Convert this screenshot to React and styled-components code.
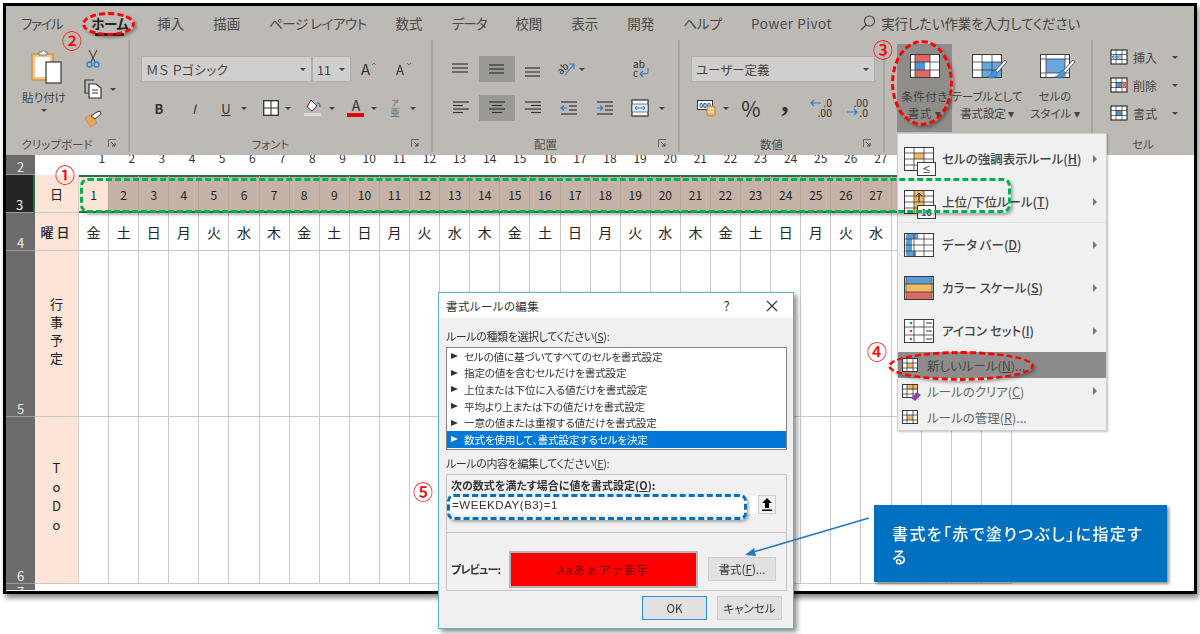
import React from "react";
import styled, { createGlobalStyle } from "styled-components";

const GlobalStyle = createGlobalStyle`
  html, body { margin: 0; padding: 0; background: #fff; }
  body {
    font-family: "Noto Sans CJK JP", "Liberation Sans", sans-serif;
    font-feature-settings: "palt";
    color: #444;
    overflow: hidden;
  }
  svg { overflow: visible; flex: none; display: block; }
`;

const Page = styled.div`
  position: relative;
  width: 1200px;
  height: 634px;
  padding: 3px;
  box-sizing: border-box;
  filter: blur(0.35px);
`;

const Frame = styled.div`
  width: 1194px;
  height: 591px;
  box-sizing: border-box;
  border: 3px solid #000;
  box-shadow: 2px 4px 5px #888;
  display: flex;
  flex-direction: column;
  overflow: hidden;
`;

/* ribbon */
const Ribbon = styled.div`
  height: 149px;
  flex: none;
  background: #bdb9b5;
  display: flex;
  flex-direction: column;
`;

const TabBar = styled.div`
  height: 34px;
  flex: none;
  display: flex;
  align-items: center;
  padding-left: 15px;
  gap: 29px;
  font-size: 13.5px;
`;

const Tab = styled.div`
  position: relative;
  white-space: nowrap;
  font-weight: ${(p) => (p.$on ? 700 : 400)};
  color: ${(p) => (p.$on ? "#222" : "#4a4a4a")};
  letter-spacing: ${(p) => p.$track || 0}px;
  ${(p) => p.$on && "box-shadow: 0 7px 0 -4px #222;"}
`;

const TellMe = styled.div`
  display: flex;
  align-items: center;
  gap: 5px;
  margin-left: -1px;
  white-space: nowrap;
  letter-spacing: -0.15px;
`;

const Groups = styled.div`
  flex: 1;
  display: flex;
  padding-bottom: 3px;
`;

const Group = styled.div`
  width: ${(p) => p.$w}px;
  flex: none;
  box-sizing: border-box;
  display: flex;
  flex-direction: column;
  border-right: ${(p) => (p.$last ? "none" : "2px solid #a8a5a1")};
`;

const GroupBody = styled.div`
  flex: 1;
  min-height: 0;
  display: flex;
  flex-direction: ${(p) => p.$dir || "column"};
  padding: ${(p) => p.$pad || "16px 0 0 11px"};
`;

const GroupLabel = styled.div`
  height: 17px;
  flex: none;
  display: grid;
  grid-template-columns: ${(p) => (p.$wide ? "1fr" : "1fr 20px")};
  align-items: center;
  font-size: 11.5px;
  color: #4d4d4d;
  text-align: center;
`;

const ControlRow = styled.div`
  height: 26px;
  flex: none;
  display: flex;
  align-items: center;
  margin-bottom: 13px;
`;

const SelectBox = styled.div`
  width: ${(p) => p.$w}px;
  height: 26px;
  flex: none;
  box-sizing: border-box;
  display: flex;
  align-items: center;
  justify-content: space-between;
  padding: 0 5px 0 4px;
  background: #d0cfce;
  border: 1px solid #b0aeab;
  font-size: 12.5px;
  letter-spacing: ${(p) => p.$track || 0}px;
`;

const ToolButton = styled.div`
  width: ${(p) => p.$w}px;
  height: 26px;
  flex: none;
  display: flex;
  align-items: center;
  justify-content: center;
  gap: ${(p) => p.$gap || 0}px;
  background: ${(p) => (p.$on ? "#9b9995" : "transparent")};
  font-size: 13px;
  color: #333;
`;

const PercentSign = styled.span`
  font-size: 21px;
  line-height: 26px;
`;

const CommaSign = styled.span`
  font-family: "Liberation Serif", serif;
  font-weight: 700;
  font-size: 30px;
  line-height: 26px;
  margin-bottom: 14px;
`;

const Caret = styled.span`
  flex: none;
  width: 0;
  height: 0;
  border-left: 3px solid transparent;
  border-right: 3px solid transparent;
  border-top: 3px solid #444;
`;

const PasteColumn = styled.div`
  width: 56px;
  flex: none;
  display: flex;
  flex-direction: column;
  align-items: center;
  font-size: 11.5px;
  gap: 4px;
  padding-top: 9px;
`;

const PasteArt = styled.div`
  margin-left: 6px;
`;

const ClipTools = styled.div`
  display: flex;
  flex-direction: column;
  gap: 10px;
  padding: 9px 0 0 12px;
`;

const ClipTool = styled.div`
  display: flex;
  align-items: center;
  gap: 8px;
  height: 20px;
`;

const ClipIconSlot = styled.div`
  width: 18px;
  display: flex;
  justify-content: center;
`;

const BigButton = styled.div`
  width: ${(p) => p.$w}px;
  height: 88px;
  flex: none;
  display: flex;
  flex-direction: column;
  align-items: center;
  padding-top: 10px;
  box-sizing: border-box;
  background: ${(p) => (p.$on ? "#8f8d8a" : "transparent")};
  font-size: 11.5px;
  line-height: 17px;
  white-space: nowrap;
  gap: 10px;
`;

const BigLabel = styled.div`
  text-align: center;
  letter-spacing: ${(p) => p.$track || 0}px;
`;

const CellRow = styled.div`
  height: 28px;
  flex: none;
  display: flex;
  align-items: center;
  gap: 5px;
  font-size: 12px;
`;

const CellCaretSlot = styled.span`
  margin-left: 10px;
  display: flex;
`;

/* sheet */
const Sheet = styled.div`
  flex: 1;
  min-height: 0;
  background: #fff;
  display: grid;
  grid-template-columns: 29px 44px repeat(31, 30.1px);
  grid-template-rows: 20px 38px 38px 166px 167px 6px;
  overflow: hidden;
  font-size: 13px;
  color: #222;
`;

const RowHead = styled.div`
  display: flex;
  align-items: ${(p) => (p.$clipped ? "flex-start" : "flex-end")};
  justify-content: center;
  background: ${(p) => (p.$on ? "#252525" : "#6b6b6b")};
  color: #eee;
  font-size: 13px;
  line-height: 15px;
  box-sizing: border-box;
  border-bottom: ${(p) => (p.$clipped ? "none" : "1px solid #9a9a9a")};
  overflow: hidden;
  ${(p) => p.$on && "border-right: 2px solid #217346;"}
`;

const ColumnNumber = styled.div`
  overflow: hidden;
  text-align: right;
  padding-right: 4px;
  font-size: 12px;
  line-height: 14px;
  color: #333;
`;

const ColumnNumberText = styled.div`
  margin-top: -4px;
`;

const LabelCell = styled.div`
  display: flex;
  align-items: center;
  justify-content: center;
  background: #fce4d6;
  box-sizing: border-box;
  border-bottom: 1px solid #c9c9c9;
  border-right: 1px solid #d9cfc6;
  font-weight: ${(p) => (p.$bold ? 500 : 400)};
  letter-spacing: ${(p) => p.$track || 0}px;
`;

const VerticalText = styled.span`
  writing-mode: vertical-rl;
  text-orientation: upright;
  letter-spacing: ${(p) => p.$track}px;
`;

const DayCell = styled.div`
  display: flex;
  align-items: center;
  justify-content: center;
  box-sizing: border-box;
  font-size: 12px;
  background: ${(p) => (p.$first ? "#fce4d6" : "#c4b3a6")};
  border-top: 2px solid #217346;
  border-bottom: 2px solid #217346;
  border-right: 1px solid #b3a498;
`;

const Cell = styled.div`
  display: flex;
  align-items: center;
  justify-content: center;
  box-sizing: border-box;
  border-right: 1px solid #c9c9c9;
  border-bottom: 1px solid #c9c9c9;
  font-size: 14px;
`;

const RowRest = styled.div`
  grid-column: 2 / -1;
`;

/* conditional formatting menu */
const Menu = styled.div`
  position: absolute;
  left: 897px;
  top: 133px;
  width: 210px;
  height: 298px;
  box-sizing: border-box;
  padding-top: 3px;
  background: #f0f0f0;
  border: 1px solid #cfcfcf;
  box-shadow: 1px 1px 2px rgba(0, 0, 0, 0.25);
  display: flex;
  flex-direction: column;
`;

const MenuItem = styled.div`
  height: ${(p) => (p.$big ? 43 : 26)}px;
  flex: none;
  display: flex;
  align-items: center;
  padding: 0 9px 0 ${(p) => (p.$big ? 6 : 4)}px;
  gap: ${(p) => (p.$big ? 8 : 9)}px;
  font-size: 12.5px;
  font-weight: ${(p) => (p.$big ? 500 : 400)};
  color: ${(p) => (p.$dim ? "#666" : "#444")};
  white-space: nowrap;
  background: ${(p) => (p.$hot ? "#8e8c8a" : "transparent")};
`;

const MenuText = styled.span`
  flex: 1;
`;

const MenuArrow = styled.span`
  flex: none;
  width: 0;
  height: 0;
  border-top: 4px solid transparent;
  border-bottom: 4px solid transparent;
  border-left: 4px solid #777;
`;

const MenuRule = styled.div`
  height: 1px;
  flex: none;
  margin-top: -1px;
  background: #e2e2e2;
`;

/* rule dialog */
const Dialog = styled.div`
  position: absolute;
  left: 438px;
  top: 292px;
  width: 356px;
  height: 337px;
  box-sizing: border-box;
  background: #f0f0f0;
  border: 1px solid #5ab4c8;
  box-shadow: 3px 3px 5px rgba(0, 0, 0, 0.45);
  display: flex;
  flex-direction: column;
  font-size: 11px;
  color: #333;
`;

const TitleBar = styled.div`
  height: 25px;
  flex: none;
  background: #fff;
  display: flex;
  align-items: center;
  padding: 0 15px 0 7px;
  font-size: 11.5px;
  letter-spacing: 0.4px;
`;

const TitleText = styled.span`
  flex: 1;
`;

const HelpMark = styled.span`
  font-size: 13px;
  margin-right: 36px;
`;

const DialogBody = styled.div`
  flex: 1;
  display: flex;
  flex-direction: column;
  padding: 10px 6px 0 7px;
`;

const FieldLabel = styled.div`
  height: 19px;
  line-height: 17px;
  font-size: 11px;
  letter-spacing: -0.4px;
`;

const RuleList = styled.div`
  height: 103px;
  flex: none;
  box-sizing: border-box;
  background: #fff;
  border: 1px solid #858585;
  margin-bottom: 5px;
`;

const RuleRow = styled.div`
  height: 16.6px;
  display: flex;
  align-items: center;
  gap: 6px;
  padding-left: 4px;
  white-space: nowrap;
  font-size: 10.7px;
  letter-spacing: -0.3px;
  background: ${(p) => (p.$on ? "#0078d7" : "transparent")};
  color: ${(p) => (p.$on ? "#fff" : "#333")};
  box-sizing: border-box;
`;

const Bullet = styled.span`
  flex: none;
  width: 0;
  height: 0;
  border-top: 3px solid transparent;
  border-bottom: 3px solid transparent;
  border-left: 7px solid currentColor;
`;

const EditBox = styled.div`
  height: 117px;
  flex: none;
  box-sizing: border-box;
  border: 1px solid #c4c4c4;
  display: flex;
  flex-direction: column;
`;

const FormulaArea = styled.div`
  height: 58px;
  flex: none;
  box-sizing: border-box;
  border-bottom: 1px solid #c4c4c4;
  padding: 2px 10px 0 4px;
`;

const FormulaCaption = styled.div`
  font-weight: 700;
  font-size: 11px;
  line-height: 17px;
  margin-bottom: 1px;
`;

const FormulaRow = styled.div`
  display: flex;
  align-items: center;
`;

const FormulaInput = styled.div`
  flex: 1;
  height: 18px;
  background: #fff;
  display: flex;
  align-items: center;
  padding-left: 3px;
  margin-left: -2px;
  font-size: 11.5px;
  font-family: "Liberation Sans", sans-serif;
  letter-spacing: 0.55px;
`;

const PickButton = styled.div`
  width: 16px;
  height: 17px;
  flex: none;
  background: #f2f2f2;
  border: 1px solid #ccc;
  display: flex;
  align-items: center;
  justify-content: center;
`;

const PreviewRow = styled.div`
  flex: 1;
  display: flex;
  align-items: flex-end;
  padding: 0 10px 2px 4px;
`;

const PreviewLabel = styled.div`
  width: 58px;
  flex: none;
  font-weight: 700;
  height: 37px;
  line-height: 37px;
  letter-spacing: -0.8px;
`;

const PreviewSwatch = styled.div`
  width: 189px;
  height: 37px;
  flex: none;
  box-sizing: border-box;
  background: #f00;
  border: 2px solid #b5b5b5;
  display: flex;
  align-items: center;
  justify-content: center;
  font-size: 12px;
  letter-spacing: 0.7px;
  font-feature-settings: normal;
  color: #7a0000;
`;

const DialogButton = styled.div`
  width: ${(p) => p.$w}px;
  height: ${(p) => p.$h}px;
  flex: none;
  box-sizing: border-box;
  background: #e1e1e1;
  border: 1px solid ${(p) => (p.$primary ? "#2f8fd8" : "#cdcdcd")};
  display: flex;
  align-items: center;
  justify-content: center;
  font-size: 11.5px;
  color: #333;
  margin: ${(p) => p.$m || 0};
`;

const DialogFooter = styled.div`
  display: flex;
  justify-content: flex-end;
  gap: 10px;
  padding: 5px 5px 0 0;
`;

/* annotations laid over the capture */
const DashedRing = styled.div`
  position: absolute;
  left: ${(p) => p.$x}px;
  top: ${(p) => p.$y}px;
  width: ${(p) => p.$w}px;
  height: ${(p) => p.$h}px;
  box-sizing: border-box;
  border: 3px dashed ${(p) => p.$c};
  border-radius: ${(p) => p.$r};
  box-shadow: 2px 2px 3px rgba(0, 0, 0, 0.3);
`;

const Marker = styled.div`
  position: absolute;
  left: ${(p) => p.$x}px;
  top: ${(p) => p.$y}px;
  color: #f00;
  font-size: 20px;
  line-height: 22px;
  font-weight: 500;
`;

const Callout = styled.div`
  position: absolute;
  left: 874px;
  top: 505px;
  width: 293px;
  height: 77px;
  box-sizing: border-box;
  padding: 17px 18px;
  background: #0070c0;
  box-shadow: 2px 2px 3px rgba(0, 0, 0, 0.45);
  color: #fff;
  font-size: 16px;
  line-height: 23px;
  font-weight: 500;
  letter-spacing: 1.4px;
`;

const ArrowLayer = styled.svg`
  position: absolute;
  left: 740px;
  top: 510px;
`;

/* icons */
const ink = "#3a3a3a";
const blue = "#2b7cd3";

function GridIcon({ w = 30, h = 24, xs, ys, fills = [], stroke = ink, children }) {
  return (
    <svg width={w} height={h} viewBox={`0 0 ${w} ${h}`}>
      <rect x="0.5" y="0.5" width={w - 1} height={h - 1} fill="#fff" />
      {fills.map(([x, y, fw, fh, c], i) => (
        <rect key={i} x={x} y={y} width={fw} height={fh} fill={c} />
      ))}
      {xs.map((x) => (
        <line key={`x${x}`} x1={x} x2={x} y1="0" y2={h} stroke={stroke} strokeWidth="0.8" />
      ))}
      {ys.map((y) => (
        <line key={`y${y}`} y1={y} y2={y} x1="0" x2={w} stroke={stroke} strokeWidth="0.8" />
      ))}
      <rect x="0.5" y="0.5" width={w - 1} height={h - 1} fill="none" stroke={stroke} />
      {children}
    </svg>
  );
}

const Badge = ({ label }) => (
  <g>
    <rect x="13.5" y="15.5" width="18" height="13" fill="#fff" stroke={ink} />
    <text x="22.5" y="26" fontSize="9" textAnchor="middle" fill={ink}>
      {label}
    </text>
  </g>
);

const Brush = () => (
  <g>
    <path d="M33 6 L23 17 L25 19 L35 8 Z" fill="#fff" stroke={ink} strokeWidth="0.8" />
    <path d="M23 16 C19 17 20 21 15 23 C20 25 26 23 25 18 Z" fill="#4b92d8" stroke="#2e6aa8" strokeWidth="0.6" />
  </g>
);

function Lines({ rows, w = 18, h = 16, color = "#333", children }) {
  return (
    <svg width={w} height={h} viewBox={`0 0 ${w} ${h}`}>
      {rows.map(([a, b, y], i) => (
        <line key={i} x1={a} x2={b} y1={y} y2={y} stroke={color} strokeWidth="1.2" />
      ))}
      {children}
    </svg>
  );
}

const PasteIcon = () => (
  <svg width="32" height="36" viewBox="0 0 32 36">
    <rect x="1" y="5" width="21" height="26" fill="#f3c48c" stroke="#d98f3e" strokeWidth="1.4" />
    <rect x="4" y="8" width="15" height="20" fill="#fff" />
    <path d="M8 6 V3 H11 C11 1 14 1 14 3 H16 V6 Z" fill="#fff" stroke="#777" />
    <rect x="15" y="13" width="15" height="21" fill="#fff" stroke="#444" strokeWidth="1.3" />
  </svg>
);

const ScissorsIcon = () => (
  <svg width="14" height="20" viewBox="0 0 14 20">
    <path d="M3 1 L9 13 M11 1 L5 13" stroke="#444" strokeWidth="1.1" fill="none" />
    <circle cx="3.5" cy="15.5" r="2.5" fill="none" stroke={blue} strokeWidth="1.3" />
    <circle cx="10.5" cy="15.5" r="2.5" fill="none" stroke={blue} strokeWidth="1.3" />
  </svg>
);

const CopyIcon = () => (
  <svg width="18" height="20" viewBox="0 0 18 20">
    <path d="M10 1 H1 V14 H5" fill="none" stroke="#333" strokeWidth="1.2" />
    <path d="M5 5 H12 L17 9 V19 H5 Z" fill="#fff" stroke="#333" strokeWidth="1.2" />
    <path d="M8 11 H14 M8 14 H14" stroke="#333" />
  </svg>
);

const PainterIcon = () => (
  <svg width="18" height="18" viewBox="0 0 18 18">
    <path d="M1 8 L8 4 L13 13 L6 17 Z" fill="#eda457" stroke="#c77f35" strokeWidth="0.6" />
    <path d="M7 6 L13 2 L16 1 L17 4 L11 9 Z" fill="#fff" stroke="#333" />
  </svg>
);

const SearchIcon = () => (
  <svg width="16" height="16" viewBox="0 0 16 16">
    <circle cx="9.5" cy="6" r="5" fill="none" stroke="#444" strokeWidth="1.1" />
    <line x1="6" y1="10" x2="1" y2="15" stroke="#444" strokeWidth="1.2" />
  </svg>
);

const GrowFont = ({ down }) => (
  <svg width="16" height="16" viewBox="0 0 16 16">
    <text x="0" y="14" fontSize={down ? 13 : 15} fill="#333">A</text>
    <path d={down ? "M11 2 L13 4 L15 2" : "M11 4 L13 2 L15 4"} fill="none" stroke={blue} />
  </svg>
);

const BorderIcon = () => (
  <svg width="16" height="16" viewBox="0 0 16 16">
    <rect x="0.7" y="0.7" width="14.6" height="14.6" fill="#fff" stroke="#333" strokeWidth="1.3" />
    <path d="M8 0 V16 M0 8 H16" stroke="#333" strokeWidth="1.1" />
  </svg>
);

const FillIcon = () => (
  <svg width="18" height="18" viewBox="0 0 18 18">
    <path d="M7 1 L13 7 L8 12 L3 8 Z" fill="#fff" stroke="#333" />
    <path d="M13 4 C15 4 16 5 16 8" stroke={blue} strokeWidth="1.6" fill="none" />
    <rect x="0" y="14" width="17" height="3" fill="#d8d8d8" />
  </svg>
);

const FontColorIcon = () => (
  <svg width="18" height="18" viewBox="0 0 18 18">
    <text x="9" y="12" fontSize="14" textAnchor="middle" fill="#333">A</text>
    <rect x="0" y="14" width="17" height="4" fill="#e8000f" />
  </svg>
);

const RubyIcon = () => (
  <svg width="14" height="20" viewBox="0 0 14 20">
    <text x="7" y="8" fontSize="8" textAnchor="middle" fill="#666">ア</text>
    <text x="7" y="18" fontSize="9" textAnchor="middle" fill="#666">亜</text>
  </svg>
);

const OrientIcon = () => (
  <svg width="20" height="20" viewBox="0 0 20 20">
    <text x="6" y="13" fontSize="10" fill="#333" transform="rotate(-45 6 10)" textAnchor="middle">ab</text>
    <path d="M8 16 L17 5 M12 5 H17 V10" fill="none" stroke={blue} strokeWidth="1.1" />
  </svg>
);

const WrapIcon = () => (
  <svg width="18" height="20" viewBox="0 0 18 20">
    <text x="1" y="9" fontSize="10" fill="#333">ab</text>
    <text x="1" y="18" fontSize="10" fill="#333">c</text>
    <path d="M16 9 V13 C16 15 14 15 8 15 M11 12 L8 15 L11 18" fill="none" stroke={blue} strokeWidth="1.1" />
  </svg>
);

const MergeIcon = () => (
  <svg width="18" height="18" viewBox="0 0 18 18">
    <rect x="1" y="1" width="16" height="16" fill="#fff" stroke="#333" strokeWidth="1.2" />
    <rect x="1" y="5" width="16" height="8" fill="#dbe9f7" stroke="#333" strokeWidth="0.6" />
    <path d="M4 9 H14 M6 7 L4 9 L6 11 M12 7 L14 9 L12 11" fill="none" stroke={blue} strokeWidth="1" />
  </svg>
);

const CurrencyIcon = () => (
  <svg width="20" height="18" viewBox="0 0 20 18">
    <rect x="0.5" y="1.5" width="15" height="9" fill="#fff" stroke="#333" />
    <text x="8" y="9" fontSize="6.5" fontWeight="700" textAnchor="middle" fill="#333">000</text>
    <rect x="10" y="7" width="8" height="10" rx="2" fill="#f2b36b" stroke="#c77f35" />
    <path d="M11 10 H17 M11 13 H17" stroke="#fff" />
  </svg>
);

const DecimalIcon = ({ more }) => (
  <svg width="22" height="18" viewBox="0 0 22 18">
    <text x="22" y="8" fontSize="10.5" textAnchor="end" fill="#333">{more ? ".00" : ".0"}</text>
    <text x="22" y="17.5" fontSize="10.5" textAnchor="end" fill="#333">{more ? ".0" : ".00"}</text>
    {more ? (
      <path d="M1 13 H11 M8 10 L11 13 L8 16" fill="none" stroke={blue} strokeWidth="1.2" />
    ) : (
      <path d="M11 4 H1 M4 1 L1 4 L4 7" fill="none" stroke={blue} strokeWidth="1.2" />
    )}
  </svg>
);

const SmallGrid = ({ fills, children }) => (
  <svg width="18" height="16" viewBox="0 0 18 16">
    <rect x="1" y="1" width="16" height="14" fill="#fff" stroke="#333" strokeWidth="1.2" />
    {fills}
    <path d="M6 1 V15 M12 1 V15 M1 5.5 H17 M1 10.5 H17" stroke="#333" strokeWidth="0.7" />
    {children}
  </svg>
);

const UpArrowIcon = () => (
  <svg width="10" height="13" viewBox="0 0 10 13">
    <path d="M5 0 L10 5 H7 V10 H3 V5 H0 Z" fill="#000" />
    <rect x="0" y="11.5" width="10" height="1.5" fill="#000" />
  </svg>
);

const alignGroups = {
  top: [[0, 16, 3], [0, 16, 7], [0, 16, 11]],
  mid: [[1, 16, 4], [1, 16, 8], [1, 16, 12]],
  bottom: [[1, 16, 7], [1, 16, 11], [1, 16, 15]],
  left: [[1, 17, 2], [1, 11, 5.5], [1, 17, 9], [1, 11, 12.5]],
  center: [[1, 17, 2], [4, 14, 5.5], [1, 17, 9], [4, 14, 12.5]],
  right: [[1, 17, 2], [7, 17, 5.5], [1, 17, 9], [7, 17, 12.5]],
};

const IndentIcon = ({ flip }) => (
  <Lines rows={[[1, 17, 2], [9, 17, 6], [9, 17, 10], [1, 17, 14]]}>
    {flip ? (
      <path d="M1 8 H7 M4 5.5 L7 8 L4 10.5" stroke={blue} strokeWidth="1.2" fill="none" />
    ) : (
      <path d="M7 8 H1 M4 5.5 L1 8 L4 10.5" stroke={blue} strokeWidth="1.2" fill="none" />
    )}
  </Lines>
);

const days = Array.from({ length: 31 }, (_, i) => i + 1);
const weekNames = ["金", "土", "日", "月", "火", "水", "木"];
const ruleTypes = [
  "セルの値に基づいてすべてのセルを書式設定",
  "指定の値を含むセルだけを書式設定",
  "上位または下位に入る値だけを書式設定",
  "平均より上または下の値だけを書式設定",
  "一意の値または重複する値だけを書式設定",
  "数式を使用して、書式設定するセルを決定",
];

const Launcher = () => (
  <svg width="9" height="9" viewBox="0 0 9 9">
    <path d="M0.5 8 V0.5 H8" fill="none" stroke="#666" />
    <path d="M3 3 L7 7 M7 4 V7 H4" fill="none" stroke="#444" />
  </svg>
);

function RibbonPanel() {
  return (
    <Ribbon>
      <TabBar>
        <Tab $track={-1.4}>ファイル</Tab>
        <Tab $on $track={-0.5}>ホーム</Tab>
        <Tab>挿入</Tab>
        <Tab>描画</Tab>
        <Tab $track={-0.5}>ページ レイアウト</Tab>
        <Tab>数式</Tab>
        <Tab $track={-1}>データ</Tab>
        <Tab>校閲</Tab>
        <Tab>表示</Tab>
        <Tab>開発</Tab>
        <Tab>ヘルプ</Tab>
        <Tab $track={0.55}>Power Pivot</Tab>
        <TellMe>
          <SearchIcon />
          実行したい作業を入力してください
        </TellMe>
      </TabBar>
      <Groups>
        <Group $w={124}>
          <GroupBody $dir="row" $pad="0 0 0 10px">
            <PasteColumn>
              <PasteArt><PasteIcon /></PasteArt>
              <span>貼り付け</span>
              <Caret />
            </PasteColumn>
            <ClipTools>
              <ClipTool><ClipIconSlot><ScissorsIcon /></ClipIconSlot></ClipTool>
              <ClipTool><ClipIconSlot><CopyIcon /></ClipIconSlot><Caret /></ClipTool>
              <ClipTool><ClipIconSlot><PainterIcon /></ClipIconSlot></ClipTool>
            </ClipTools>
          </GroupBody>
          <GroupLabel>クリップボード<Launcher /></GroupLabel>
        </Group>

        <Group $w={303}>
          <GroupBody>
            <ControlRow>
              <SelectBox $w={171} $track={0.5}>ＭＳ Ｐゴシック<Caret /></SelectBox>
              <SelectBox $w={39}>11<Caret /></SelectBox>
              <ToolButton $w={35}><GrowFont /></ToolButton>
              <ToolButton $w={35}><GrowFont down /></ToolButton>
            </ControlRow>
            <ControlRow>
              <ToolButton $w={36}><b>B</b></ToolButton>
              <ToolButton $w={34}><i>I</i></ToolButton>
              <ToolButton $w={46} $gap={10}><u>U</u><Caret /></ToolButton>
              <ToolButton $w={40} $gap={6}><BorderIcon /><Caret /></ToolButton>
              <ToolButton $w={44} $gap={7}><FillIcon /><Caret /></ToolButton>
              <ToolButton $w={41} $gap={6}><FontColorIcon /><Caret /></ToolButton>
              <ToolButton $w={40} $gap={8}><RubyIcon /><Caret /></ToolButton>
            </ControlRow>
          </GroupBody>
          <GroupLabel>フォント<Launcher /></GroupLabel>
        </Group>

        <Group $w={247}>
          <GroupBody $pad="16px 0 0 10px">
            <ControlRow>
              <ToolButton $w={36}><Lines rows={alignGroups.top} /></ToolButton>
              <ToolButton $w={36} $on><Lines rows={alignGroups.mid} /></ToolButton>
              <ToolButton $w={36}><Lines rows={alignGroups.bottom} /></ToolButton>
              <ToolButton $w={40} $gap={2}><OrientIcon /><Caret /></ToolButton>
              <ToolButton $w={32} />
              <ToolButton $w={36}><WrapIcon /></ToolButton>
            </ControlRow>
            <ControlRow>
              <ToolButton $w={36}><Lines rows={alignGroups.left} /></ToolButton>
              <ToolButton $w={36} $on><Lines rows={alignGroups.center} /></ToolButton>
              <ToolButton $w={36}><Lines rows={alignGroups.right} /></ToolButton>
              <ToolButton $w={36}><IndentIcon /></ToolButton>
              <ToolButton $w={36}><IndentIcon flip /></ToolButton>
              <ToolButton $w={50} $gap={10}><MergeIcon /><Caret /></ToolButton>
            </ControlRow>
          </GroupBody>
          <GroupLabel>配置<Launcher /></GroupLabel>
        </Group>

        <Group $w={205}>
          <GroupBody>
            <ControlRow>
              <SelectBox $w={184}>ユーザー定義<Caret /></SelectBox>
            </ControlRow>
            <ControlRow>
              <ToolButton $w={44} $gap={6}><CurrencyIcon /><Caret /></ToolButton>
              <ToolButton $w={32}><PercentSign>%</PercentSign></ToolButton>
              <ToolButton $w={36}><CommaSign>,</CommaSign></ToolButton>
              <ToolButton $w={36}><DecimalIcon /></ToolButton>
              <ToolButton $w={36}><DecimalIcon more /></ToolButton>
            </ControlRow>
          </GroupBody>
          <GroupLabel>数値<Launcher /></GroupLabel>
        </Group>

        <Group $w={208}>
          <GroupBody $dir="row" $pad="4px 0 0 12px">
            <BigButton $w={55} $on>
              <GridIcon
                xs={[5, 20]}
                ys={[8, 16]}
                fills={[[5, 0, 15, 8, "#e06666"], [5, 8, 10, 8, "#4b92d8"], [5, 16, 15, 8, "#e06666"]]}
              />
              <BigLabel $track={0.5}>条件付き<br />書式 ▾</BigLabel>
            </BigButton>
            <BigButton $w={70}>
              <GridIcon xs={[10, 20]} ys={[8, 16]} fills={[[10, 8, 20, 16, "#6aa6dd"]]}>
                <Brush />
              </GridIcon>
              <BigLabel $track={-0.2}>テーブルとして<br />書式設定 ▾</BigLabel>
            </BigButton>
            <BigButton $w={66}>
              <GridIcon xs={[6, 25]} ys={[5, 19]} fills={[[6, 5, 19, 14, "#6aa6dd"]]}>
                <Brush />
              </GridIcon>
              <BigLabel>セルの<br />スタイル ▾</BigLabel>
            </BigButton>
          </GroupBody>
          <GroupLabel />
        </Group>

        <Group $w={100} $last>
          <GroupBody $pad="3px 0 0 17px">
            <CellRow>
              <SmallGrid fills={<rect x="6" y="5" width="6" height="6" fill="#9cc3ea" />}>
                <path d="M9 8 H2 M5 5.5 L2 8 L5 10.5" stroke={blue} fill="none" />
              </SmallGrid>
              挿入
              <CellCaretSlot><Caret /></CellCaretSlot>
            </CellRow>
            <CellRow>
              <SmallGrid fills={<rect x="6" y="5" width="6" height="6" fill="#4b92d8" />}>
                <path d="M12 5 L17 11 M17 5 L12 11" stroke="#d9534f" strokeWidth="1.4" />
              </SmallGrid>
              削除
              <CellCaretSlot><Caret /></CellCaretSlot>
            </CellRow>
            <CellRow>
              <SmallGrid fills={<rect x="6" y="5" width="6" height="6" fill="#4b92d8" />} />
              書式
              <CellCaretSlot><Caret /></CellCaretSlot>
            </CellRow>
          </GroupBody>
          <GroupLabel $wide>セル</GroupLabel>
        </Group>
      </Groups>
    </Ribbon>
  );
}

function SheetPanel() {
  return (
    <Sheet>
      <RowHead>2</RowHead>
      <div />
      {days.map((d) => (
        <ColumnNumber key={d}><ColumnNumberText>{d}</ColumnNumberText></ColumnNumber>
      ))}

      <RowHead $on>3</RowHead>
      <LabelCell>日</LabelCell>
      {days.map((d) => (
        <DayCell key={d} $first={d === 1}>{d}</DayCell>
      ))}

      <RowHead>4</RowHead>
      <LabelCell $bold $track={3}>曜日</LabelCell>
      {days.map((d) => (
        <Cell key={d}>{weekNames[(d - 1) % 7]}</Cell>
      ))}

      <RowHead>5</RowHead>
      <LabelCell><VerticalText $track={5}>行事予定</VerticalText></LabelCell>
      {days.map((d) => (
        <Cell key={d} />
      ))}

      <RowHead>6</RowHead>
      <LabelCell><VerticalText $track={6}>ToDo</VerticalText></LabelCell>
      {days.map((d) => (
        <Cell key={d} />
      ))}

      <RowHead $clipped>7</RowHead>
      <RowRest />
    </Sheet>
  );
}

function RuleMenu() {
  return (
    <Menu>
      <MenuItem $big>
        <GridIcon xs={[10, 20]} ys={[6, 12, 18]} fills={[[10, 6, 10, 6, "#f0b860"]]}>
          <Badge label="≤" />
        </GridIcon>
        <MenuText>セルの強調表示ルール(<u>H</u>)</MenuText>
        <MenuArrow />
      </MenuItem>
      <MenuItem $big>
        <GridIcon xs={[10, 20]} ys={[6, 12, 18]} fills={[[10, 0, 10, 24, "#f0b860"]]}>
          <path d="M15 12 V3 M12 6 L15 3 L18 6" stroke="#222" fill="none" />
          <Badge label="10" />
        </GridIcon>
        <MenuText>上位/下位ルール(<u>T</u>)</MenuText>
        <MenuArrow />
      </MenuItem>
      <MenuRule />
      <MenuItem $big>
        <GridIcon xs={[10, 20]} ys={[6, 12, 18]} fills={[[2, 0, 12, 6, "#5b9bd5"], [2, 6, 6, 12, "#5b9bd5"], [2, 18, 10, 6, "#5b9bd5"]]} />
        <MenuText>データ バー(<u>D</u>)</MenuText>
        <MenuArrow />
      </MenuItem>
      <MenuItem $big>
        <GridIcon xs={[2, 28]} ys={[8, 16]} fills={[[2, 0, 26, 8, "#5b9bd5"], [2, 8, 26, 8, "#f0b860"], [2, 16, 26, 8, "#dd6a62"]]} />
        <MenuText>カラー スケール(<u>S</u>)</MenuText>
        <MenuArrow />
      </MenuItem>
      <MenuItem $big>
        <GridIcon xs={[10, 20]} ys={[8, 16]}>
          <circle cx="7" cy="4" r="1.3" fill={blue} />
          <circle cx="7" cy="12" r="1.3" fill="#d9363e" />
          <circle cx="7" cy="20" r="1.3" fill={blue} />
          <path d="M22 4 H28 M22 12 H28 M22 20 H28" stroke="#333" />
        </GridIcon>
        <MenuText>アイコン セット(<u>I</u>)</MenuText>
        <MenuArrow />
      </MenuItem>
      <MenuItem $hot>
        <GridIcon w={16} h={14} xs={[5, 11]} ys={[5, 10]} fills={[[5, 5, 6, 5, "#f0b860"]]} />
        <MenuText>新しいルール(<u>N</u>)...</MenuText>
      </MenuItem>
      <MenuItem $dim>
        <GridIcon w={16} h={14} xs={[5, 11]} ys={[5, 10]} fills={[[5, 0, 11, 6, "#f0b860"]]}>
          <path d="M9 14 L15 8 L19 11 L13 17 Z" fill="#8e44ad" />
        </GridIcon>
        <MenuText>ルールのクリア(<u>C</u>)</MenuText>
        <MenuArrow />
      </MenuItem>
      <MenuItem $dim>
        <GridIcon w={16} h={14} xs={[5, 11]} ys={[5, 10]} fills={[[5, 5, 6, 5, "#f0b860"]]} />
        <MenuText>ルールの管理(<u>R</u>)...</MenuText>
      </MenuItem>
    </Menu>
  );
}

function RuleDialog() {
  return (
    <Dialog>
      <TitleBar>
        <TitleText>書式ルールの編集</TitleText>
        <HelpMark>?</HelpMark>
        <svg width="12" height="12" viewBox="0 0 12 12">
          <path d="M1 1 L11 11 M11 1 L1 11" stroke="#333" strokeWidth="1.1" />
        </svg>
      </TitleBar>
      <DialogBody>
        <FieldLabel>ルールの種類を選択してください(<u>S</u>):</FieldLabel>
        <RuleList>
          {ruleTypes.map((text, i) => (
            <RuleRow key={text} $on={i === ruleTypes.length - 1}>
              <Bullet />
              {text}
            </RuleRow>
          ))}
        </RuleList>
        <FieldLabel>ルールの内容を編集してください(<u>E</u>):</FieldLabel>
        <EditBox>
          <FormulaArea>
            <FormulaCaption>次の数式を満たす場合に値を書式設定(<u>O</u>):</FormulaCaption>
            <FormulaRow>
              <FormulaInput>=WEEKDAY(B3)=1</FormulaInput>
              <PickButton><UpArrowIcon /></PickButton>
            </FormulaRow>
          </FormulaArea>
          <PreviewRow>
            <PreviewLabel>プレビュー:</PreviewLabel>
            <PreviewSwatch>Aaあぁアァ亜宇</PreviewSwatch>
            <DialogButton $w={68} $h={24} $m="0 0 7px 10px">書式(<u>F</u>)...</DialogButton>
          </PreviewRow>
        </EditBox>
        <DialogFooter>
          <DialogButton $w={65} $h={24} $primary>OK</DialogButton>
          <DialogButton $w={65} $h={24}>キャンセル</DialogButton>
        </DialogFooter>
      </DialogBody>
    </Dialog>
  );
}

export default function App() {
  return (
    <>
      <GlobalStyle />
      <Page>
        <Frame>
          <RibbonPanel />
          <SheetPanel />
        </Frame>
        <RuleMenu />
        <RuleDialog />

        <DashedRing $x={82} $y={12} $w={53} $h={24} $c="#f00" $r="50%" />
        <DashedRing $x={891} $y={40} $w={62} $h={86} $c="#f00" $r="50%" />
        <DashedRing $x={888} $y={351} $w={146} $h={30} $c="#f00" $r="50%" />
        <DashedRing $x={80} $y={178} $w={931} $h={35} $c="#00b050" $r="8px" />
        <DashedRing $x={447} $y={494} $w={300} $h={26} $c="#0070c0" $r="7px" />

        <Marker $x={55} $y={164}>①</Marker>
        <Marker $x={62} $y={30}>②</Marker>
        <Marker $x={873} $y={39}>③</Marker>
        <Marker $x={867} $y={341}>④</Marker>
        <Marker $x={413} $y={481}>⑤</Marker>

        <ArrowLayer width="132" height="50" viewBox="0 0 132 50">
          <path d="M129 8 L10 43" stroke="#1f78c1" strokeWidth="1.6" fill="none" />
          <path d="M5 45 L14 38 L16 46 Z" fill="#1f78c1" />
        </ArrowLayer>
        <Callout>書式を「赤で塗りつぶし」に指定する</Callout>
      </Page>
    </>
  );
}
